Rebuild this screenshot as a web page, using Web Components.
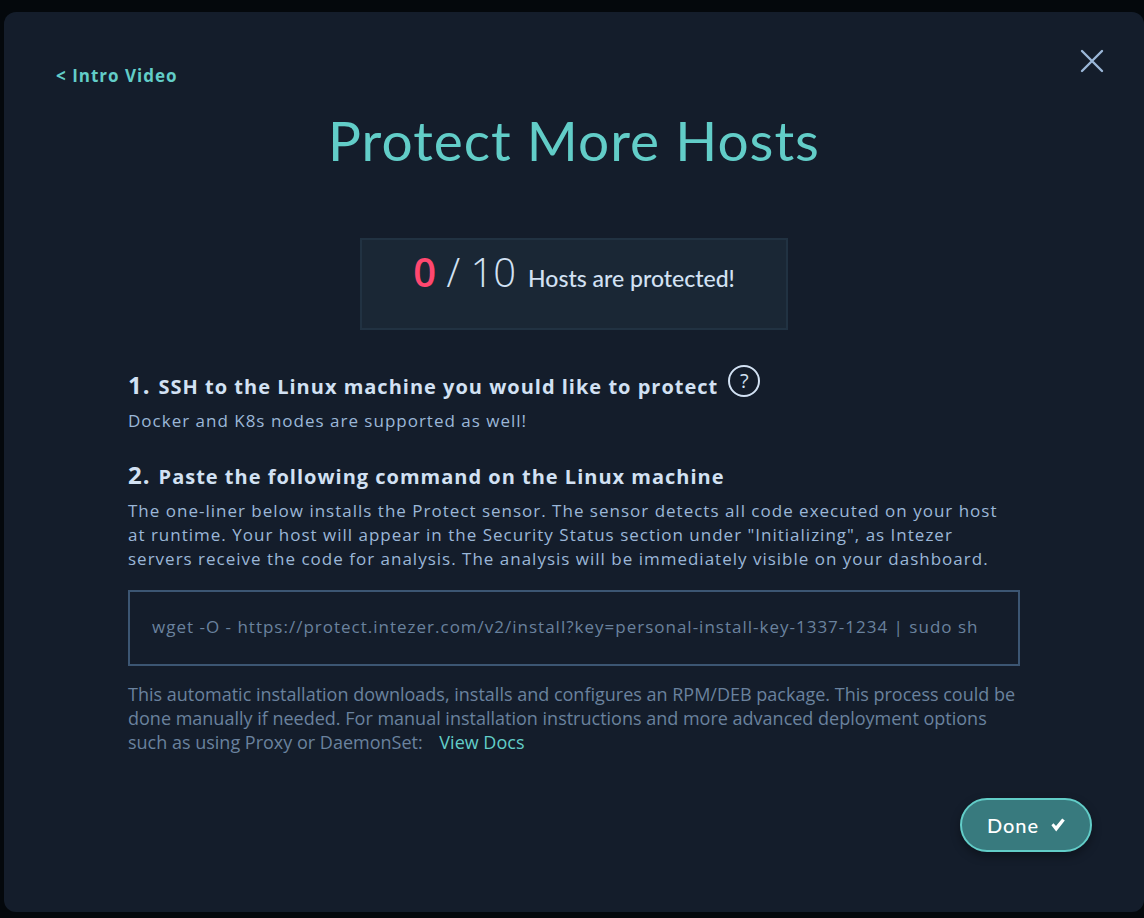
<!DOCTYPE html>
<html lang="en">
<head>
<meta charset="utf-8">
<meta name="viewport" content="width=device-width, initial-scale=1">
<title>Protect More Hosts</title>
<style>
  html { background: #04080c; }
  body {
    margin: 0;
    padding: 12px 0 6px 4px;
    font-family: "Open Sans", "Noto Sans", sans-serif;
    font-size: 18px;
    line-height: 24px;
    --panel: #141d2b;
    --teal: #62cdc8;
    --bright: #d2e1f3;
    --soft: #9bb7d8;
    --dim: #6a829e;
    --display: Lato, "Open Sans", sans-serif;
  }
</style>
</head>
<body>
<protect-dialog>
  <a-back slot="back" href="#intro">&lt; Intro Video</a-back>
  <span slot="title">Protect More Hosts</span>
  <host-counter slot="counter" current="0" total="10">Hosts are protected!</host-counter>
  <setup-step number="1">
    <span slot="heading">SSH to the Linux machine you would like to protect</span>
    <help-button slot="extra"></help-button>
    Docker and K8s nodes are supported as well!
  </setup-step>
  <setup-step number="2">
    <span slot="heading">Paste the following command on the Linux machine</span>
    The one-liner below installs the Protect sensor. The sensor detects all code executed on your host at runtime. Your host will appear in the Security Status section under "Initializing", as Intezer servers receive the code for analysis. The analysis will be immediately visible on your dashboard.
  </setup-step>
  <command-box command="wget -O - https://protect.intezer.com/v2/install?key=personal-install-key-1337-1234 | sudo sh"></command-box>
  <docs-note href="#docs">This automatic installation downloads, installs and configures an RPM/DEB package. This process could be done manually if needed. For manual installation instructions and more advanced deployment options such as using Proxy or DaemonSet:</docs-note>
  <done-button slot="action">Done</done-button>
</protect-dialog>

<script>
  function define(name, markup, setup) {
    const template = document.createElement('template');
    template.innerHTML = markup;
    customElements.define(name, class extends HTMLElement {
      connectedCallback() {
        if (this.shadowRoot) return;
        const root = this.attachShadow({ mode: 'open' });
        root.append(template.content.cloneNode(true));
        if (setup) setup(this, root);
      }
    });
  }

  define('protect-dialog', `
    <style>
      :host {
        display: block;
        box-sizing: border-box;
        min-height: calc(100vh - 18px);
        padding: 36px 52px 60px;
        border-radius: 12px;
        background: var(--panel);
      }
      header { display: flex; justify-content: space-between; align-items: flex-start; }
      .back { padding-top: 15px; }
      h1 {
        margin: 16px 0 62px;
        color: var(--teal);
        font: 400 55px/72px var(--display);
        letter-spacing: 1px;
        text-align: center;
      }
      .counter { display: flex; justify-content: center; }
      .content { margin: 32px 72px 0; }
      footer { display: flex; justify-content: flex-end; margin-top: 44px; }
    </style>
    <section role="dialog" aria-labelledby="title">
      <header>
        <div class="back"><slot name="back"></slot></div>
        <close-button></close-button>
      </header>
      <h1 id="title"><slot name="title"></slot></h1>
      <div class="counter"><slot name="counter"></slot></div>
      <div class="content"><slot></slot></div>
      <footer><slot name="action"></slot></footer>
    </section>`);

  define('a-back', `
    <style>
      :host { display: block; }
      a { color: var(--teal); font-size: 17px; font-weight: 700; letter-spacing: 1px; text-decoration: none; }
    </style>
    <a><slot></slot></a>`, (host, root) => {
      root.querySelector('a').href = host.getAttribute('href');
    });

  define('close-button', `
    <style>
      :host { display: block; margin-right: -12px; }
      button { display: block; padding: 0; border: 0; background: none; cursor: pointer; }
      svg { display: block; }
    </style>
    <button type="button" aria-label="Close">
      <svg width="24" height="26" viewBox="0 0 24 26" fill="none" stroke="#9bb7d8" stroke-width="2.4" stroke-linecap="round">
        <path d="M2 3 22 23M22 3 2 23"/>
      </svg>
    </button>`);

  define('host-counter', `
    <style>
      :host {
        display: flex;
        box-sizing: border-box;
        width: 428px;
        height: 92px;
        padding-top: 8px;
        justify-content: center;
        align-items: baseline;
        gap: 12px;
        border: 2px solid #213242;
        background: #1a2735;
        color: var(--bright);
      }
      .count { font: 300 40px/48px "Open Sans", sans-serif; }
      .current { color: #ff476f; font-weight: 600; }
      .label { font: 500 23px/28px var(--display); }
    </style>
    <span class="count"><span class="current"></span> / <span class="total"></span></span>
    <span class="label"><slot></slot></span>`, (host, root) => {
      root.querySelector('.current').textContent = host.getAttribute('current');
      root.querySelector('.total').textContent = host.getAttribute('total');
    });

  define('setup-step', `
    <style>
      :host { display: block; margin-bottom: 19px; color: var(--soft); letter-spacing: 1px; }
      h2 {
        display: flex;
        align-items: baseline;
        gap: 8px;
        height: 47px;
        margin: 0;
        color: var(--bright);
        font-size: 20px;
        line-height: 46px;
        font-weight: 700;
      }
      .number { font-size: 24px; }
      .extra { align-self: flex-start; padding: 3px 0 0 2px; }
      p { margin: 0; font-size: 17px; }
    </style>
    <h2><span class="number"></span><slot name="heading"></slot><span class="extra"><slot name="extra"></slot></span></h2>
    <p><slot></slot></p>`, (host, root) => {
      root.querySelector('.number').textContent = host.getAttribute('number') + '.';
    });

  define('help-button', `
    <style>
      :host { display: block; }
      button {
        display: block;
        box-sizing: border-box;
        width: 32px;
        height: 32px;
        padding: 0;
        border: 2px solid var(--bright);
        border-radius: 50%;
        background: none;
        color: var(--bright);
        font: 400 20px/28px "Open Sans", sans-serif;
        cursor: pointer;
      }
    </style>
    <button type="button" title="Help">?</button>`);

  define('command-box', `
    <style>
      :host { display: block; }
      input {
        display: block;
        box-sizing: border-box;
        width: 100%;
        height: 76px;
        margin: 0;
        padding: 0 22px 4px;
        border: 2px solid #3c5673;
        border-radius: 0;
        outline: 0;
        background: transparent;
        color: var(--dim);
        font: inherit;
        font-size: 17px;
        letter-spacing: 1px;
      }
    </style>
    <input type="text" readonly aria-label="Install command">`, (host, root) => {
      root.querySelector('input').value = host.getAttribute('command');
    });

  define('docs-note', `
    <style>
      :host { display: block; margin-top: 16px; color: var(--dim); }
      p { margin: 0; }
      a { margin-left: 12px; color: var(--teal); text-decoration: none; }
    </style>
    <p><slot></slot> <a>View Docs</a></p>`, (host, root) => {
      root.querySelector('a').href = host.getAttribute('href');
    });

  define('done-button', `
    <style>
      :host { display: block; }
      button {
        display: flex;
        box-sizing: border-box;
        width: 132px;
        height: 54px;
        padding: 0;
        justify-content: center;
        align-items: center;
        gap: 12px;
        border: 2px solid var(--teal);
        border-radius: 27px;
        background: #387a7e;
        box-shadow: 0 4px 10px rgba(0, 0, 0, .35);
        color: #fff;
        font: 500 20px/24px var(--display);
        letter-spacing: 1px;
        cursor: pointer;
      }
    </style>
    <button type="button"><slot></slot>
      <svg width="14" height="14" viewBox="0 0 14 14" aria-hidden="true">
        <path d="M.4 7.3 2.5 5.2 5 8 11.2.4 13.8 2.6 5.2 13.4Z" fill="#fff"/>
      </svg>
    </button>`);
</script>
</body>
</html>
